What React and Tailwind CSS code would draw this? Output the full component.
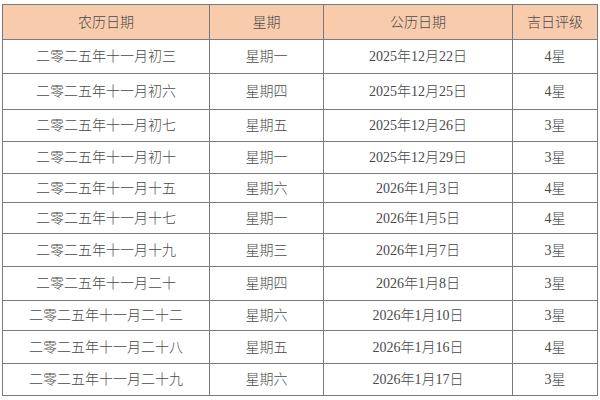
const rows = [
    ["二零二五年十一月初三", "星期一", "2025年12月22日", "4星", 34],
    ["二零二五年十一月初六", "星期四", "2025年12月25日", "4星", 36],
    ["二零二五年十一月初七", "星期五", "2025年12月26日", "3星", 32],
    ["二零二五年十一月初十", "星期一", "2025年12月29日", "3星", 32],
    ["二零二五年十一月十五", "星期六", "2026年1月3日", "4星", 29],
    ["二零二五年十一月十七", "星期一", "2026年1月5日", "4星", 31],
    ["二零二五年十一月十九", "星期三", "2026年1月7日", "3星", 33],
    ["二零二五年十一月二十", "星期四", "2026年1月8日", "3星", 34],
    ["二零二五年十一月二十二", "星期六", "2026年1月10日", "3星", 30],
    ["二零二五年十一月二十八", "星期五", "2026年1月16日", "4星", 33],
    ["二零二五年十一月二十九", "星期六", "2026年1月17日", "3星", 32],
]

const cell = "border border-[#7a7a7a] text-center align-middle p-0"

export default function App() {
    return (
        <div className="w-[600px] h-[400px] bg-white pt-[4px] pl-[2px]" style={{ fontFamily: '"Liberation Serif", "Noto Sans CJK SC", serif' }}>
            <table className="table-fixed border-collapse w-[595px] text-[14px] text-[#4a4a4a] font-light">
                <colgroup>
                    <col className="w-[207px]" />
                    <col className="w-[114px]" />
                    <col className="w-[189px]" />
                    <col className="w-[85px]" />
                </colgroup>
                <thead>
                    <tr className="h-[35px] bg-[#f8cbad]">
                        <th className={cell + " font-light"}>农历日期</th>
                        <th className={cell + " font-light"}>星期</th>
                        <th className={cell + " font-light"}>公历日期</th>
                        <th className={cell + " font-light"}>吉日评级</th>
                    </tr>
                </thead>
                <tbody>
                    {rows.map((r) => (
                        <tr key={r[0]} style={{ height: r[4] }}>
                            <td className={cell}>{r[0]}</td>
                            <td className={cell}>{r[1]}</td>
                            <td className={cell}>{r[2]}</td>
                            <td className={cell}>{r[3]}</td>
                        </tr>
                    ))}
                </tbody>
            </table>
        </div>
    )
}
